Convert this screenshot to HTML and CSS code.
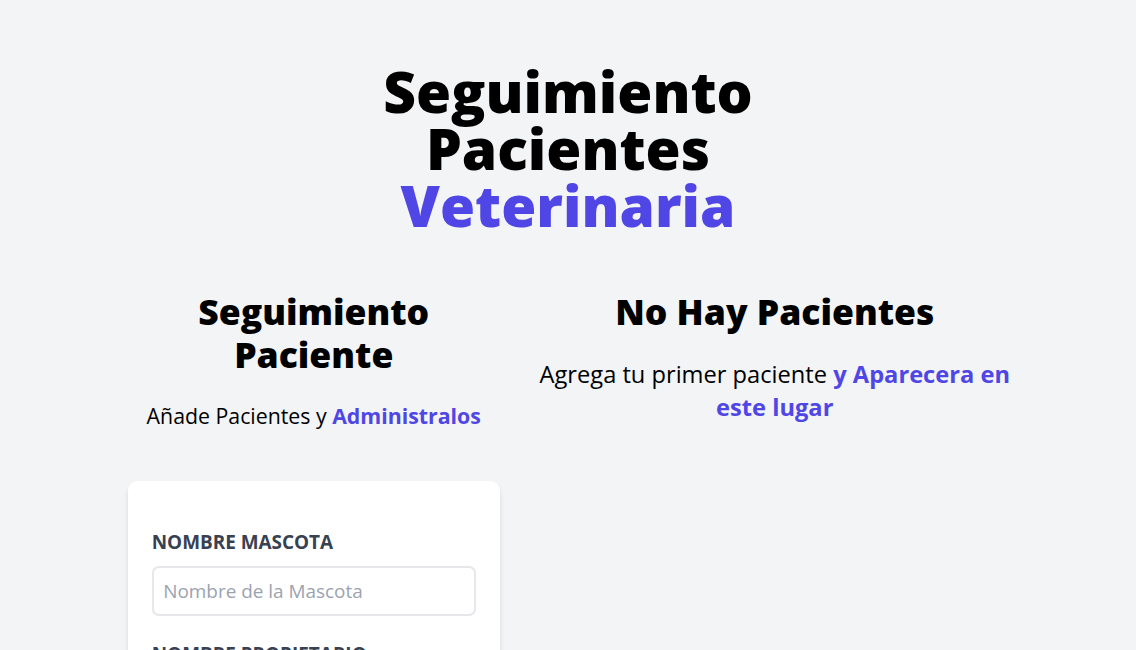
FILE: index.html
```html
<!DOCTYPE html>
<html lang="es">
<head>
<meta charset="utf-8">
<title>Seguimiento Pacientes Veterinaria</title>
<link rel="stylesheet" href="styles.css">
</head>
<body>
<div class="app">
  <header class="header">
    <h1 class="title">Seguimiento Pacientes <span class="accent">Veterinaria</span></h1>
  </header>
  <main class="main">
    <section class="form-col">
      <h2 class="section-title">Seguimiento Paciente</h2>
      <p class="lead">Añade Pacientes y <span class="accent-bold">Administralos</span></p>
      <form class="card">
        <div class="field">
          <label class="label" for="mascota">Nombre Mascota</label>
          <input class="input" id="mascota" type="text" placeholder="Nombre de la Mascota">
        </div>
        <div class="field">
          <label class="label" for="propietario">Nombre Propietario</label>
          <input class="input" id="propietario" type="text" placeholder="Nombre del Propietario">
        </div>
      </form>
    </section>
    <section class="list-col">
      <h2 class="section-title">No Hay Pacientes</h2>
      <p class="lead lead-xl">Agrega tu primer paciente <span class="accent-bold">y Aparecera en este lugar</span></p>
    </section>
  </main>
</div>
</body>
</html>
```
FILE: styles.css
```css
* { box-sizing: border-box; }
html, body { margin: 0; padding: 0; }
body {
  background: #f3f4f6;
  font-family: "Open Sans", "Liberation Sans", sans-serif;
  color: #000;
  overflow: hidden;
  height: 650px;
}
.app { padding-top: 63px; }
.header { display: flex; justify-content: center; }
.title {
  margin: 0;
  width: 606px;
  font-size: 56.8px;
  font-weight: 800;
  line-height: 56.8px;
  text-align: center;
}
.accent { color: #4f46e5; }
.main {
  display: flex;
  padding: 0 106px 0 108px;
  margin-top: 56.8px;
}
.form-col { width: 371.5px; margin: 0 20px; flex-shrink: 0; }
.list-col { flex: 1; min-width: 0; }
.section-title {
  margin: 0;
  font-size: 35.5px;
  font-weight: 800;
  line-height: 42.6px;
  text-align: center;
}
.lead {
  margin: 23.7px 0 49px;
  font-size: 21.3px;
  line-height: 33.1px;
  text-align: center;
}
.lead-xl { margin-top: 25.5px; font-size: 23.67px; line-height: 32.5px; }
.accent-bold { color: #4f46e5; font-weight: 700; }
.card {
  background: #fff;
  border-radius: 9.5px;
  box-shadow: 0 5px 7px -1px rgba(0,0,0,0.1), 0 2px 5px -2px rgba(0,0,0,0.1);
  padding: 47.3px 23.7px;
}
.field { margin-bottom: 23.7px; }
.label {
  display: block;
  font-size: 18.93px;
  font-weight: 700;
  line-height: 28.4px;
  color: #374151;
  text-transform: uppercase;
}
.input {
  display: block;
  width: 100%;
  height: 50px;
  margin-top: 9.5px;
  padding: 0 9.5px;
  border: 2px solid #e5e7eb;
  border-radius: 7px;
  font-family: inherit;
  font-size: 18.93px;
  background: #fff;
}
.input::placeholder { color: #9ca3af; }
```
